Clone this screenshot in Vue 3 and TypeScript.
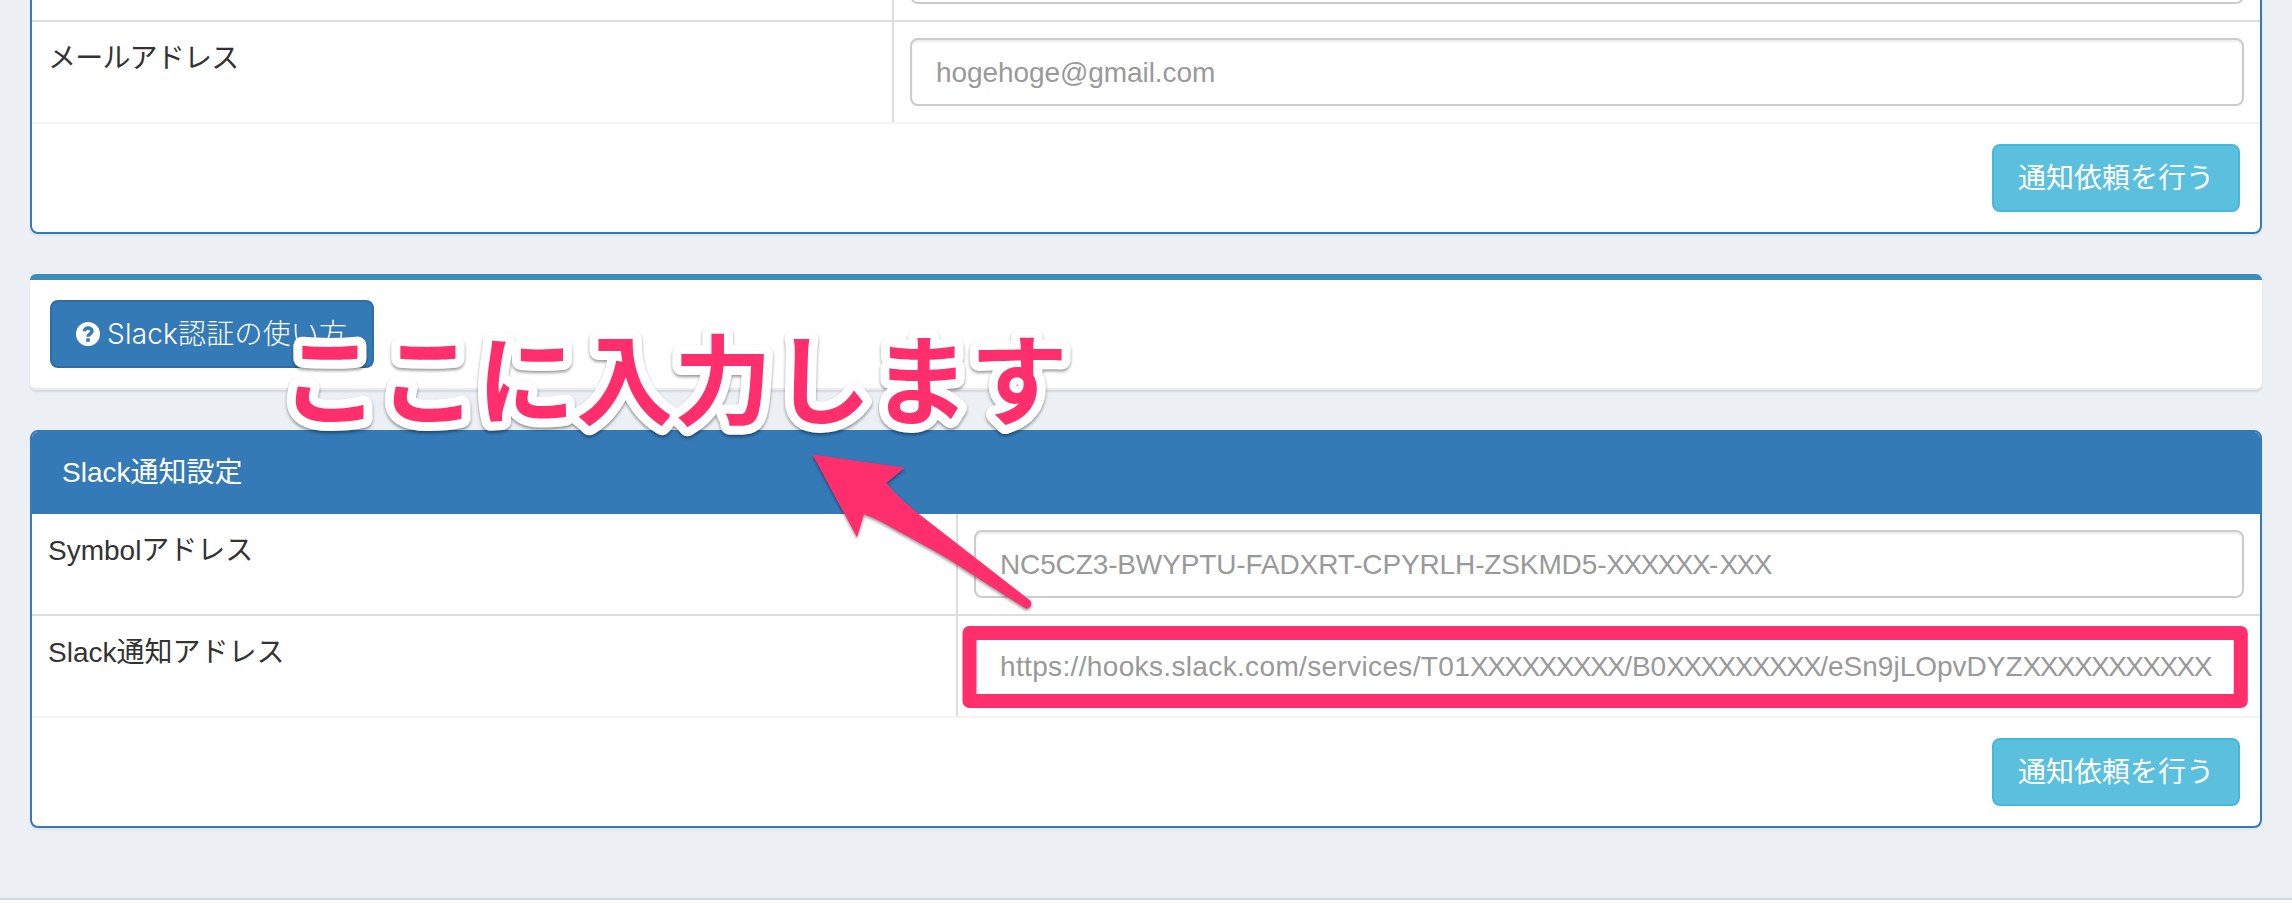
<script setup lang="ts">
interface Part {
  text: string
  fit: string
}

interface Field {
  label: string
  value: Part[]
}

const slackFields: Field[] = [
  {
    label: 'Symbolアドレス',
    value: [
      { text: 'NC5CZ3-BWYPTU-FADXRT-CPYRLH-ZSKMD5-', fit: 'snug' },
      { text: 'XXXXXX', fit: 'tight' },
      { text: '-', fit: 'wide' },
      { text: 'XXX', fit: 'tight' },
    ],
  },
  {
    label: 'Slack通知アドレス',
    value: [
      { text: 'https://hooks.slack.com/services/T01', fit: 'loose' },
      { text: 'XXXXXXXXX', fit: 'tight' },
      { text: '/B0', fit: 'plain' },
      { text: 'XXXXXXXXX', fit: 'tight' },
      { text: '/eSn9jLOpvDYZ', fit: 'plain' },
      { text: 'XXXXXXXXXXX', fit: 'tight' },
    ],
  },
]
</script>

<template>
  <div class="page">
    <main class="content">
      <section class="panel panel-mail">
        <div class="row">
          <div class="label"></div>
          <div class="cell"><div class="input"></div></div>
        </div>
        <div class="row">
          <div class="label kana">メールアドレス</div>
          <div class="cell"><div class="input"><span class="mail">hogehoge@gmail.com</span></div></div>
        </div>
        <div class="actions"><button class="btn info">通知依頼を行う</button></div>
      </section>

      <section class="box">
        <button class="btn primary">
          <svg class="icon" viewBox="0 0 24 24">
            <circle cx="12" cy="12" r="12" fill="#fff" />
            <path d="M8 9.2C8.9 7 10.2 6 12 6c2.300 0 4 1.300 4 3.200 0 2.900-4 2.600-4 5.500" fill="none" stroke="#337ab7" stroke-width="3.400" />
            <rect x="10.200" y="16.300" width="3.600" height="3.500" fill="#337ab7" />
          </svg>
          <span class="btn-text">Slack認証の使い方</span>
        </button>
      </section>

      <section class="panel panel-slack">
        <header class="heading">Slack通知設定</header>
        <div v-for="field in slackFields" :key="field.label" class="row">
          <div class="label">{{ field.label }}</div>
          <div class="cell">
            <div class="input"><span v-for="(part, i) in field.value" :key="i" :class="part.fit">{{ part.text }}</span></div>
          </div>
        </div>
        <div class="actions"><button class="btn info">通知依頼を行う</button></div>
      </section>
    </main>
    <footer class="footer"></footer>

    <svg class="annotation" width="2292" height="904" viewBox="0 0 2292 904">
      <rect class="frame" x="969.500" y="633" width="1271.300" height="68" />
      <path
        class="arrow"
        d="M812.500 454.500 L905 467.700 L886.400 482.700 C896 495 906 503 917 512.500 L1029.500 600 A4.600 4.600 0 0 1 1024 607.500 L988.600 585 L952.900 562 C935 551 920 543 899 531.700 C887 525 876 518.500 864 514.300 L857 537.300 Z"
      />
      <text class="caption" x="281 379 477 576 674 773 872 970" y="417">ここに入力します</text>
    </svg>
  </div>
</template>

<style>
body {
  margin: 0;
  background: #ecf0f5;
}
</style>

<style scoped>
.page {
  position: relative;
  height: 904px;
  overflow: hidden;
  display: flex;
  flex-direction: column;
  background: #ecf0f5;
  color: #333;
  font: 28px/40px "Liberation Sans", "Noto Sans CJK JP", sans-serif;
}
.content {
  flex: 1;
  padding: 0 30px;
}
.panel {
  box-sizing: border-box;
  background: #fff;
  border: 2px solid #337ab7;
  border-radius: 8px;
  box-shadow: 0 2px 2px rgba(0, 0, 0, 0.05);
}
/* Scrolled partly out of view at the top of the page */
.panel-mail {
  height: 316px;
  margin-top: -82px;
  --label: 860px;
}
.panel-slack {
  margin-top: 40px;
  height: 398px;
  --label: 924px;
}
.row {
  display: grid;
  grid-template-columns: var(--label) minmax(0, 1fr);
  height: 100px;
  border-bottom: 2px solid #ddd;
}
.row:nth-last-child(2) {
  border-bottom-color: #f4f4f4;
}
.label {
  padding: 17px 16px 0;
  white-space: nowrap;
}
.kana {
  letter-spacing: -0.8px;
}
.cell {
  padding: 16px;
  border-left: 2px solid #ddd;
}
.input {
  box-sizing: border-box;
  height: 68px;
  padding: 13px 24px 0;
  border: 2px solid #ccc;
  border-radius: 8px;
  box-shadow: inset 0 2px 2px rgba(0, 0, 0, 0.075);
  color: #999;
  white-space: nowrap;
}
.mail {
  letter-spacing: -0.08px;
}
.snug {
  letter-spacing: -0.13px;
}
.loose {
  letter-spacing: 0.35px;
}
.plain {
  letter-spacing: 0;
}
.wide {
  letter-spacing: 1.05px;
}
.tight {
  letter-spacing: -1.56px;
}
.actions {
  display: flex;
  justify-content: flex-end;
  padding: 20px;
}
.btn {
  box-sizing: border-box;
  height: 68px;
  padding: 0 24px;
  border: 2px solid;
  border-radius: 8px;
  color: #fff;
  font: inherit;
  white-space: nowrap;
}
.info {
  width: 248px;
  padding: 2px 22px 0;
  background: #5bc0de;
  border-color: #46b8da;
}
.primary {
  display: flex;
  align-items: center;
  gap: 7px;
  width: 324px;
  background: #337ab7;
  border-color: #2e6da4;
  font-family: Inter, "Noto Sans CJK JP", sans-serif;
  font-weight: 300;
}
.btn-text {
  letter-spacing: 0.2px;
}
.icon {
  flex: none;
  width: 24px;
  height: 24px;
}
.box {
  box-sizing: border-box;
  height: 116px;
  margin-top: 40px;
  padding: 20px;
  border-top: 6px solid #3c8dbc;
  border-bottom: 2px solid #ececee;
  border-radius: 6px;
  background: #fff;
  box-shadow: 0 2px 2px rgba(0, 0, 0, 0.1);
}
.heading {
  height: 82px;
  box-sizing: border-box;
  padding: 21px 30px 0;
  background: #337ab7;
  border-radius: 6px 6px 0 0;
  color: #fff;
}
.footer {
  height: 4px;
  border-top: 2px solid #d2d6de;
  background: #fff;
}
.annotation {
  position: absolute;
  inset: 0;
}
.frame {
  fill: none;
  stroke: #ff2f6e;
  stroke-width: 14;
  stroke-linejoin: round;
}
.arrow {
  fill: #ff2f6e;
  filter: drop-shadow(0 2px 1.5px rgba(0, 0, 0, 0.4));
}
.caption {
  font: 700 98px "Noto Sans CJK JP", sans-serif;
  fill: #ff2f6e;
  stroke: #fff;
  stroke-width: 18px;
  stroke-linejoin: round;
  paint-order: stroke;
  filter: drop-shadow(0 2px 1.5px rgba(0, 0, 0, 0.4));
}
</style>
